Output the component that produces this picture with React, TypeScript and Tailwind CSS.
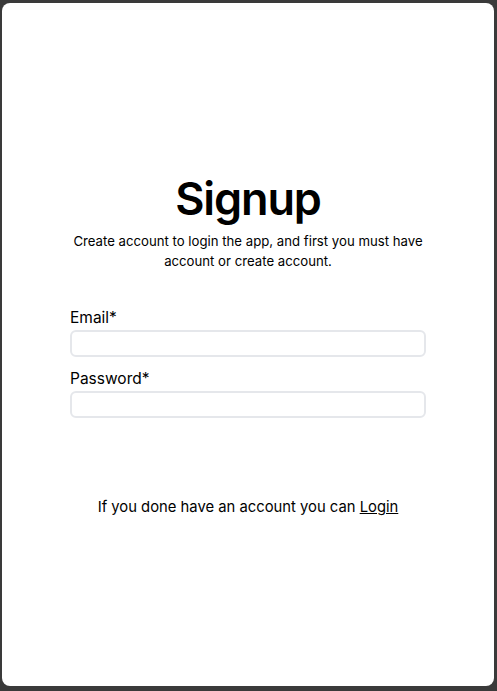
export default function App() {
  return (
    <div className="h-[691px] w-[497px] bg-[#3a3a3a] pt-[3px] pl-[2px] pr-[3px] pb-[5px] font-['Inter',sans-serif]">
      <div className="flex h-full w-full flex-col items-center justify-center rounded-lg bg-white pt-[6px] text-black">
        <h1 className="text-[45px] font-semibold leading-none tracking-tight">Signup</h1>
        <p className="mt-[10px] w-[370px] text-center text-[13.2px] leading-5">
          Create account to login the app, and first you must have account or create account.
        </p>

        <form className="mt-[35px] flex w-[356px] flex-col">
          <label className="text-[15.5px] leading-6">Email*</label>
          <input type="email" className="h-[27px] rounded-md border-2 border-[#e5e7eb] px-2 outline-none" />
          <label className="mt-[10px] text-[15.5px] leading-6">Password*</label>
          <input type="password" className="h-[27px] rounded-md border-2 border-[#e5e7eb] px-2 outline-none" />
        </form>

        <p className="mt-[78px] text-[14.8px]">
          If you done have an account you can <a href="#" className="underline">Login</a>
        </p>
      </div>
    </div>
  );
}
